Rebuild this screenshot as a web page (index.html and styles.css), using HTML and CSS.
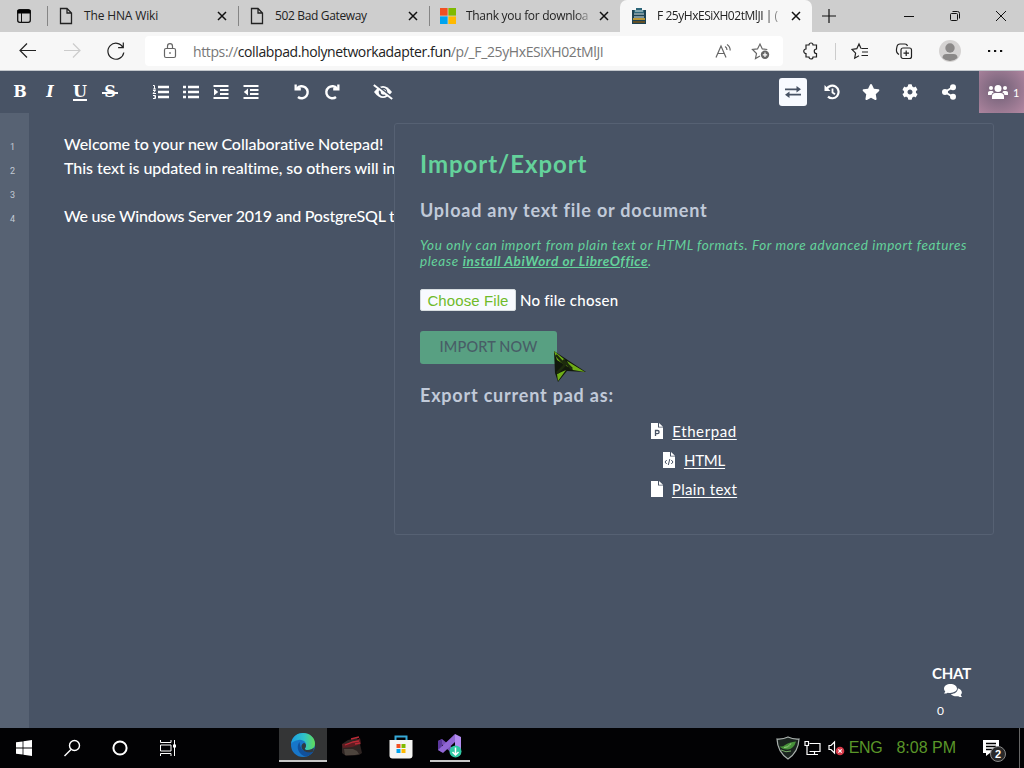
FILE: index.html
```html
<!DOCTYPE html>
<html lang="en">
<head>
  <meta charset="UTF-8">
  <title>F 25yHxESiXH02tMlJI</title>
  <link rel="stylesheet" href="styles.css">
</head>
<body>

  <!-- Browser tabs -->
  <div class="tab-bar">
    <div class="tab-actions">
      <svg width="16" height="16" viewBox="0 0 16 16"><rect x="1.7" y="1.7" width="12.6" height="12.6" rx="2" fill="none" stroke="#111" stroke-width="1.3"/><path d="M1.5 2h13v3.5h-13z"/><path d="M5.5 5v9" stroke="#111"/></svg>
    </div>
    <div class="tab">
      <svg class="tab-icon" width="16" height="18" viewBox="0 0 16 18"><path d="M2.5 1.5h6.500l4.500 4.500v10.500h-11zM9 1.500v4.500h4.500" fill="none" stroke="#222" stroke-width="1.300"/></svg>
      <span class="tab-title t1">The HNA Wiki</span>
      <svg class="tab-close" width="10" height="10" viewBox="0 0 10 10"><path d="M1 1l8 8M9 1L1 9"/></svg>
    </div>
    <div class="tab">
      <svg class="tab-icon" width="16" height="18" viewBox="0 0 16 18"><path d="M2.5 1.5h6.500l4.500 4.500v10.500h-11zM9 1.500v4.500h4.500" fill="none" stroke="#222" stroke-width="1.300"/></svg>
      <span class="tab-title t2">502 Bad Gateway</span>
      <svg class="tab-close" width="10" height="10" viewBox="0 0 10 10"><path d="M1 1l8 8M9 1L1 9"/></svg>
    </div>
    <div class="tab">
      <svg class="tab-icon" width="16" height="16" viewBox="0 0 16 16"><path d="M0 0h7.600v7.600H0z" fill="#f25022"/><path d="M8.400 0H16v7.600H8.400z" fill="#7fba00"/><path d="M0 8.400h7.600V16H0z" fill="#00a4ef"/><path d="M8.400 8.400H16V16H8.400z" fill="#ffb900"/></svg>
      <span class="tab-title t3 fade">Thank you for downloa</span>
      <svg class="tab-close" width="10" height="10" viewBox="0 0 10 10"><path d="M1 1l8 8M9 1L1 9"/></svg>
    </div>
    <div class="tab active">
      <svg class="tab-icon" width="16" height="16" viewBox="0 0 16 16"><path d="M1 2h14v14H1z" fill="#1d4253"/><path d="M5 2V0h6v2h2v3H3V2z" fill="#2d6679"/><path d="M4 3h8M3 6h10M3 9h10" stroke="#d7e5e8"/><path d="M2 10h12v2H2z" fill="#b79536"/><path d="M2 13h12v2H2z" fill="#624f25"/></svg>
      <span class="tab-title t4 fade">F 25yHxESiXH02tMlJI | (</span>
      <svg class="tab-close" width="10" height="10" viewBox="0 0 10 10"><path d="M1 1l8 8M9 1L1 9"/></svg>
    </div>
    <svg class="new-tab" width="14" height="14" viewBox="0 0 14 14"><path d="M7 0v14M0 7h14" stroke="#111" stroke-width="1.200"/></svg>
    <div class="window-buttons">
      <svg width="46" height="32" viewBox="0 0 46 32"><path d="M18 16.500h10"/></svg>
      <svg width="46" height="32" viewBox="0 0 46 32"><rect x="18.500" y="13.500" width="7" height="7" rx="1"/><path d="M20.500 11.500h5a2 2 0 0 1 2 2v5"/></svg>
      <svg width="46" height="32" viewBox="0 0 46 32"><path d="M18 11l10 10M28 11L18 21"/></svg>
    </div>
  </div>

  <!-- Address bar -->
  <div class="nav-bar">
    <div class="nav-buttons">
      <svg width="44" height="38" viewBox="0 0 44 38"><path d="M36 18.500H20.500M27 11.500l-7 7 7 7"/></svg>
      <svg class="disabled" width="44" height="38" viewBox="0 0 44 38"><path d="M20 18.500h15.500M29 11.500l7 7-7 7"/></svg>
      <svg width="44" height="38" viewBox="0 0 44 38"><path d="M35 15.500a8 8 0 1 0 .800 5M35.300 10.500v5.200h-5.200"/></svg>
    </div>
    <div class="address">
      <svg width="14" height="16" viewBox="0 0 14 16"><rect x="1.500" y="5.500" width="11" height="9" rx="1.500"/><path d="M4.500 5.500V3.200a2.500 2.500 0 0 1 5 0v2.300M7 9v2"/></svg>
      <span class="url">https://<b>collabpad.holynetworkadapter.fun</b>/p/_F_25yHxESiXH02tMlJI</span>
      <svg class="read-aloud" width="17" height="16" viewBox="0 0 17 16"><path d="M1 14.500L6 3l5 11.500M3 10.500h6M10 3.500q2 1 2 3.500M12 1.500q3.200 2 3.200 6"/></svg>
      <svg width="20" height="18" viewBox="0 0 20 18"><path d="M9 14l-4.500 2.500 1-5L1.500 7.500l5-.600L9 2l2.300 4.900 5 .600"/><circle cx="14" cy="12.800" r="4.200" fill="#666" stroke="none"/><path d="M14 10.600v4.400M11.800 12.800h4.400" stroke="#fff"/></svg>
    </div>
    <div class="browser-tools">
      <svg width="18" height="18" viewBox="0 0 18 18"><path d="M4 3h3a2 2 0 0 1 4 0h3.500v4a2 2 0 0 0 0 4.500V15H11a2 2 0 0 1-4 0H4v-3.500a2.200 2.200 0 0 1 0-4.500z"/></svg>
      <i></i>
      <svg width="18" height="18" viewBox="0 0 18 18"><path d="M10 6.500L8 2 5.800 6.700l-4.800.800 3.600 3.700-.900 5 4.300-2.400M10.500 6.500H17M11 10h6M10.500 13.500H17"/></svg>
      <svg width="18" height="18" viewBox="0 0 18 18"><rect x="6" y="6" width="10.500" height="10.500" rx="2"/><path d="M11.200 8.500v5.500M8.500 11.200H14M4 12.500Q1 11 1.500 7l.500-2.500Q2.500 2 5 2h5q2 0 2.500 2"/></svg>
      <svg class="avatar" width="22" height="22" viewBox="0 0 22 22"><circle cx="11" cy="11" r="11" fill="#d5d3d2"/><circle cx="11" cy="8" r="4.700" fill="#8b8988"/><path d="M3.500 18q0-4 4-4h7q4 0 4 4a11 11 0 0 1-15 0" fill="#8b8988"/></svg>
      <svg width="16" height="4" viewBox="0 0 16 4"><path d="M1 1h2.200v2H1zM7 1h2.200v2H7zM13 1h2.200v2H13z" fill="#111" stroke="none"/></svg>
    </div>
  </div>

  <!-- Editor toolbar -->
  <div class="toolbar">
    <div class="group">
      <span class="btn letter">B</span>
      <span class="btn letter italic">I</span>
      <span class="btn letter under">U</span>
      <span class="btn letter strike">S</span>
    </div>
    <div class="group">
      <span class="btn"><svg width="18" height="16" viewBox="0 0 18 16"><path d="M6 3h11M6 8h11M6 13h11" stroke="#fff" stroke-width="2.400"/><path d="M1 1.500h1.500V5M1 5h3M1 6.500h2.500L1 9.500h3M1 11.500h2.500v3H1m1-1.500h1" fill="none" stroke="#fff"/></svg></span>
      <span class="btn"><svg width="18" height="16" viewBox="0 0 18 16"><path d="M6 3h11M6 8h11M6 13h11M1 3h3M1 8h3M1 13h3" stroke="#fff" stroke-width="2.600"/></svg></span>
      <span class="btn"><svg width="16" height="16" viewBox="0 0 16 16"><path d="M.500 2h15M7 6h8.500M7 10h8.500M.500 14h15" stroke="#fff" stroke-width="2.200"/><path d="M1 4.500L5.200 8 1 11.500z" fill="#fff"/></svg></span>
      <span class="btn"><svg width="16" height="16" viewBox="0 0 16 16"><path d="M.500 2h15M7 6h8.500M7 10h8.500M.500 14h15" stroke="#fff" stroke-width="2.200"/><path d="M5 4.500L.800 8 5 11.500z" fill="#fff"/></svg></span>
    </div>
    <div class="group">
      <span class="btn"><svg width="16" height="16" viewBox="0 0 16 16"><path d="M3 4.500A6 6 0 1 1 4 13" fill="none" stroke="#fff" stroke-width="2.400"/><path d="M.500.500h2.300v3.400h4V6.500H.500z" fill="#fff"/></svg></span>
      <span class="btn"><svg width="16" height="16" viewBox="0 0 16 16"><path d="M13 4.500A6 6 0 1 0 12 13" fill="none" stroke="#fff" stroke-width="2.400"/><path d="M15.500.500h-2.300v3.400h-4V6.500h6.300z" fill="#fff"/></svg></span>
    </div>
    <div class="group">
      <span class="btn"><svg width="20" height="16" viewBox="0 0 20 16"><path d="M1 8q9-12 18 0-9 12-18 0z" fill="#fff"/><circle cx="10" cy="8" r="4.300" fill="#485365"/><circle cx="10.500" cy="8" r="2.700" fill="#fff"/><path d="M1 -.500L20 14" stroke="#485365" stroke-width="2"/><path d="M.800 1L19.200 15" stroke="#fff" stroke-width="2"/></svg></span>
    </div>
    <div class="pad-menu">
      <span class="menu-btn selected"><svg width="16" height="14" viewBox="0 0 16 14"><path d="M0 4.300h13M3 9.700h13" stroke="#485365" stroke-width="1.700"/><path d="M11.500 1L16 4.300l-4.500 3.200zM4.500 6.500L0 9.700 4.500 13z" fill="#485365"/></svg></span>
      <span class="menu-btn"><svg width="16" height="16" viewBox="0 0 16 16"><path d="M2.700 5A6.300 6.300 0 1 1 4 12.600" fill="none" stroke="#fff" stroke-width="2.200"/><path d="M.500 1v6h6z" fill="#fff"/><path d="M8.500 4.500v4l2.500 1.800" fill="none" stroke="#fff" stroke-width="1.800"/></svg></span>
      <span class="menu-btn"><svg width="18" height="16" viewBox="0 0 576 512"><path fill="#fff" d="M259.300 17.800L194 150.200 47.900 171.500c-26.200 3.800-36.700 36.100-17.700 54.600l105.700 103-25 145.500c-4.500 26.300 23.200 46 46.400 33.700L288 439.600l130.700 68.700c23.200 12.200 50.900-7.400 46.400-33.700l-25-145.500 105.700-103c19-18.500 8.500-50.800-17.700-54.600L382 150.200 316.700 17.800c-11.700-23.600-45.600-23.900-57.400 0z"/></svg></span>
      <span class="menu-btn"><svg width="16" height="16" viewBox="0 0 512 512"><path fill="#fff" d="M487.400 315.700l-42.600-24.600c4.300-23.200 4.300-47 0-70.200l42.600-24.600c4.900-2.800 7.100-8.600 5.500-14-11.100-35.600-30-67.800-54.700-94.600-3.800-4.100-10-5.100-14.800-2.300L380.800 110c-17.900-15.400-38.500-27.300-60.800-35.100V25.800c0-5.600-3.900-10.500-9.400-11.700-36.700-8.200-74.300-7.800-109.200 0-5.500 1.200-9.400 6.100-9.400 11.700V75c-22.200 7.900-42.800 19.800-60.800 35.100L88.700 85.500c-4.900-2.800-11-1.900-14.800 2.300-24.700 26.700-43.600 58.900-54.700 94.600-1.700 5.400.6 11.200 5.500 14L67.300 221c-4.300 23.200-4.300 47 0 70.200l-42.600 24.600c-4.900 2.800-7.100 8.600-5.500 14 11.100 35.600 30 67.800 54.700 94.600 3.800 4.100 10 5.100 14.800 2.300l42.600-24.600c17.900 15.400 38.500 27.300 60.800 35.100v49.200c0 5.600 3.900 10.500 9.400 11.700 36.700 8.200 74.300 7.800 109.200 0 5.500-1.200 9.400-6.100 9.400-11.700v-49.200c22.200-7.900 42.800-19.800 60.800-35.100l42.600 24.600c4.900 2.800 11 1.900 14.800-2.300 24.700-26.700 43.600-58.900 54.700-94.600 1.500-5.500-.7-11.300-5.600-14.100zM256 336c-44.100 0-80-35.900-80-80s35.900-80 80-80 80 35.900 80 80-35.900 80-80 80z"/></svg></span>
      <span class="menu-btn"><svg width="14" height="16" viewBox="0 0 14 16"><path d="M11 3L3 8l8 5" fill="none" stroke="#fff" stroke-width="2"/><g fill="#fff"><circle cx="11" cy="3.200" r="3"/><circle cx="3" cy="8" r="3"/><circle cx="11" cy="12.800" r="3"/></g></svg></span>
    </div>
    <div class="users">
      <svg width="20" height="16" viewBox="0 0 20 16"><g fill="#fff"><circle cx="10" cy="4.500" r="3.500"/><circle cx="3" cy="4" r="2"/><circle cx="17" cy="4" r="2"/><path d="M4 15v-2.500Q4 9 7.500 9h5q3.500 0 3.500 3.500V15zM0 10V8.500Q0 7 2 7h2.500l1.300 1.200Q3.700 9 3.500 11H0zM20 10V8.500Q20 7 18 7h-2.500l-1.300 1.200q2.100.800 2.300 2.800H20z"/></g></svg>
      <span>1</span>
    </div>
  </div>

  <!-- Pad -->
  <div class="editor">
    <div class="line-numbers">
      <div>1</div>
      <div>2</div>
      <div>3</div>
      <div>4</div>
    </div>
    <div class="pad-text">
      <div class="l1">Welcome to your new Collaborative Notepad!</div>
      <div class="l2">This text is updated in realtime, so others will in</div>
      <div>&nbsp;</div>
      <div class="l4">We use Windows Server 2019 and PostgreSQL t</div>
    </div>

    <div class="popup">
      <h1>Import/Export</h1>
      <h2>Upload any text file or document</h2>
      <p class="note"><span class="n1">You only can import from plain text or HTML formats. For more advanced import features</span><br><span class="n2">please <a>install AbiWord or LibreOffice</a>.</span></p>
      <div class="file-row"><span class="choose">Choose File</span><span class="no-file">No file chosen</span></div>
      <div class="import-btn">IMPORT NOW</div>
      <h2 class="export-title">Export current pad as:</h2>
      <div class="export-list">
        <div><svg width="12" height="16" viewBox="0 0 12 16"><path d="M0 0h7v4.500h5V16H0zM8 0l4 3.700H8z" fill="#fff"/><path d="M4.500 13V7.500h2a1.500 1.500 0 0 1 0 3.200h-2" fill="none" stroke="#485365" stroke-width="1.300"/></svg><a class="e1">Etherpad</a></div>
        <div><svg width="12" height="16" viewBox="0 0 12 16"><path d="M0 0h7v4.500h5V16H0zM8 0l4 3.700H8z" fill="#fff"/><path d="M3.700 8L2 10l1.700 2M8.300 8L10 10l-1.700 2M6.800 7l-1.500 6" fill="none" stroke="#485365"/></svg><a class="e2">HTML</a></div>
        <div><svg width="12" height="16" viewBox="0 0 12 16"><path d="M0 0h7v4.500h5V16H0zM8 0l4 3.700H8z" fill="#fff"/></svg><a class="e3">Plain text</a></div>
      </div>
    </div>

    <div class="chat">
      <b>CHAT</b>
      <svg width="18" height="14" viewBox="0 0 18 14"><path d="M6.500 0C2.800 0 0 2 0 4.600c0 1.200.5 2.200 1.300 3L0 9.600c1.500.1 2.800-.3 3.800-.9C9 9.500 13 7.600 13 4.600 13 2 10 0 6.500 0z" fill="#fff"/><path d="M13.800 4.300c.3 3.300-3 5.600-7 5.700 1.400 2 4.600 2.700 7.500 2.200 1.100.7 2.300 1 3.700.9l-1.300-2c2.200-2.200 1.300-5.600-2.900-6.800z" fill="#fff"/></svg>
      <span>0</span>
    </div>
  </div>

  <!-- Windows taskbar -->
  <div class="taskbar">
    <div class="task"><svg width="16" height="16" viewBox="0 0 16 16"><path d="M0 2.300L6.600 1.400v6.200H0zM7.400 1.300L16 0v7.600H7.400zM0 8.400h6.600v6.200L0 13.700zM7.400 8.400H16V16l-8.600-1.300z" fill="#fff"/></svg></div>
    <div class="task"><svg width="18" height="18" viewBox="0 0 18 18"><circle cx="11.500" cy="6.500" r="5" fill="none" stroke="#fff" stroke-width="1.400"/><path d="M8 10.500L1.500 17" stroke="#fff" stroke-width="1.500"/></svg></div>
    <div class="task"><svg width="18" height="18" viewBox="0 0 18 18"><circle cx="9" cy="9" r="6.600" fill="none" stroke="#fff" stroke-width="2"/></svg></div>
    <div class="task"><svg width="17" height="16" viewBox="0 0 17 16"><path d="M.500 0v2.500h10.500V0M.500 16v-2.500h10.500V16M.500 5h10.500v6H.500zM14.500 0v16" fill="none" stroke="#fff"/><path d="M13 4.500h3v3h-3z" fill="#fff"/></svg></div>
    <div class="apps">
      <div class="app current"><svg width="26" height="26" viewBox="0 0 26 26"><defs><linearGradient id="eg"><stop offset="0" stop-color="#1b9de2"/><stop offset=".55" stop-color="#2fc2c8"/><stop offset="1" stop-color="#62dc56"/></linearGradient></defs><circle cx="13" cy="13" r="12" fill="#1776c9"/><path d="M1 12C2 4 8 1 13 1c7 0 12 5 12 10.500 0 5-4 6.500-7.500 6.500-3 0-3-1.500-2-2.500C18 11 13 7 8.500 8 5 8.500 2 10 1 12z" fill="url(#eg)"/><path d="M9.500 10c-4 5-1 13 6.500 14.500 3-.500 6-2.500 7.500-5-7 2.500-13.500-1-14-9.500z" fill="#11509b"/><path d="M15.500 15.500c-1 1-1 2.500 2 2.500 3 0 5-1 6.300-2.200L23.500 19.500c-6 2.500-11.500-.500-12-4.500-.300-2 1.300-4 3-4 1.500 1 2 3 1 4.500z" fill="#303a40"/></svg></div>
      <div class="app"><svg width="24" height="24" viewBox="0 0 24 24"><path d="M2 9L8 5l9-2 3 6 2 9-3 2-13 1-4-3z" fill="#2e2422"/><path d="M2 9l12-2 6-4 1 6-9 3-9 1z" fill="#5e1d22"/><path d="M5 10l8-3 6-1M11 4l8-2M15 9l5-1" fill="none" stroke="#bb2936" stroke-width="1.300"/><path d="M4 14h9l4 2 2 3-4 1H5z" fill="#4d443d"/></svg></div>
      <div class="app"><svg width="24" height="26" viewBox="0 0 24 26"><path d="M6.500 7V2.500h11V7" fill="none" stroke="#36a9d8" stroke-width="2"/><path d="M.500 6h23v15.500q0 3-3 3h-17q-3 0-3-3z" fill="#f5f5f3"/><path d="M7.500 10h4v4h-4z" fill="#f25022"/><path d="M12.500 10h4v4h-4z" fill="#7fba00"/><path d="M7.500 15h4v4h-4z" fill="#00a4ef"/><path d="M12.500 15h4v4h-4z" fill="#ffb900"/></svg></div>
      <div class="app running"><svg width="26" height="26" viewBox="0 0 26 26"><path d="M1 8l4-2 17 14-4 3z" fill="#7851b9"/><path d="M1 8l4-2v13l-4-2z" fill="#5b379d"/><path d="M18 1l6 3v17l-6 3z" fill="#b38cf0"/><path d="M18 1v8L6 20l-5-3z" fill="#9167d5"/><circle cx="18.500" cy="18.500" r="6" fill="#2fc9a5"/><path d="M18.500 14.500v7M15.500 19l3 3 3-3" fill="none" stroke="#fff" stroke-width="1.500"/></svg></div>
    </div>
    <div class="tray">
      <svg class="rog" width="24" height="24" viewBox="0 0 24 24"><path d="M1 3q6 .500 11-2 5 2.500 11 2-.500 13-11 20Q1.500 16 1 3z" fill="#1b2420" stroke="#a9b0ad" stroke-width="1.200"/><path d="M3 10q3 1.500 6-1 4-3 11-3.500-2 7-8 8-5 .500-9-3.500z" fill="#47913a"/><path d="M5 14q5 3 10 1M8 11.500q3 .500 7-4-1 4-7 4z" fill="#1b2420" stroke="#8ccb76" stroke-width=".8"/></svg>
      <svg class="net" width="17" height="16" viewBox="0 0 17 16"><path d="M5.500 3.500h10.500v8H5.500M10.500 11.500v3M7 14.500h7M1 1.500h3.500v4H1zM3 5.500v9h4" fill="none" stroke="#fff" stroke-width="1.200"/></svg>
      <svg class="vol" width="17" height="16" viewBox="0 0 17 16"><path d="M1 5.500h2L6.500 2v11L3 9.500H1z" fill="none" stroke="#fff" stroke-width="1.200"/><circle cx="12" cy="11" r="4.300" fill="#d73a49"/><path d="M10.300 9.300l3.400 3.400M13.700 9.300l-3.400 3.400" stroke="#fff" stroke-width="1.200"/></svg>
      <span class="lang">ENG</span>
      <span class="clock">8:08 PM</span>
      <span class="notice">
        <svg width="18" height="18" viewBox="0 0 18 18"><path d="M1 1h16v13H8l-4 3v-3H1z" fill="#fff"/><path d="M4 4.500h10M4 7.500h10M4 10.500h6" stroke="#000" stroke-width="1.300"/></svg>
        <span class="badge">2</span>
      </span>
    </div>
  </div>

  <!-- Mouse pointer -->
  <svg class="pointer" width="35" height="34" viewBox="0 0 35 34"><path d="M1 1l32 21-19-1-9 11-3-9z" fill="#11180c"/><path d="M1 1l10 8 4 8L4 10zM14 11l18 11-12-2-4-5zM4 24l9-4-8 11z" fill="#6fae18"/><path d="M3 5l9 10-8 8M10 10l9 9" fill="none" stroke="#1d2b0d" stroke-width="2.500"/></svg>

</body>
</html>
```
FILE: styles.css
```css
* {
  box-sizing: border-box;
}

body {
  margin: 0;
  width: 1024px;
  height: 768px;
  overflow: hidden;
  display: flex;
  flex-direction: column;
  font-family: Lato, "Liberation Sans", sans-serif;
  background: #485365;
}

svg {
  flex: none;
}

/* Browser tabs */
.tab-bar {
  height: 32px;
  display: flex;
  align-items: center;
  background: #cecece;
  font: 12px "Open Sans", sans-serif;
  color: #222;
}

.tab-actions {
  width: 47px;
  padding-left: 16px;
  display: flex;
}

.tab {
  width: 191px;
  height: 32px;
  display: flex;
  align-items: center;
  padding: 0 11px 0 11px;
  background: linear-gradient(#858585, #858585) 0 50% / 1px 20px no-repeat;
}

.tab-icon {
  margin-right: 10px;
}

.tab-title {
  flex: 1;
  white-space: nowrap;
  line-height: 20px;
}

.fade {
  -webkit-mask-image: linear-gradient(to right, #000 85%, transparent);
  mask-image: linear-gradient(to right, #000 85%, transparent);
}

.tab-close {
  margin-left: 5px;
  fill: none;
  stroke: #111;
  stroke-width: 1.5;
}

.tab.active {
  width: 192px;
  background: #f7f7f7;
  border-radius: 7px 7px 0 0;
}

.t1 { letter-spacing: -0.15px; }
.t2 { letter-spacing: -0.35px; }
.t3 { letter-spacing: -0.3px; }
.t4 { letter-spacing: -0.45px; }

.new-tab {
  margin-left: 10px;
}

.window-buttons {
  margin-left: auto;
  display: flex;
  fill: none;
  stroke: #111;
}

/* Address bar */
.nav-bar {
  height: 39px;
  display: flex;
  align-items: center;
  background: #f7f7f7;
  border-bottom: 1px solid #c3c7cc;
  fill: none;
  stroke: #222;
  stroke-width: 1.2;
}

.nav-buttons {
  width: 145px;
  display: flex;
}

.disabled {
  stroke: #ccc;
}

.address {
  width: 638px;
  height: 30px;
  display: flex;
  align-items: center;
  padding: 0 12px 0 18px;
  background: #fff;
  border-radius: 4px;
  stroke: #666;
}

.url {
  flex: 1;
  margin-left: 16px;
  font: 14px "Open Sans", sans-serif;
  letter-spacing: -0.38px;
  color: #777;
}

.url b {
  font-weight: 400;
  color: #222;
}

.read-aloud {
  margin-right: 19px;
}

.browser-tools {
  flex: 1;
  display: flex;
  align-items: center;
  padding-left: 19px;
}

.browser-tools i {
  width: 1px;
  height: 17px;
  margin: 0 15px 0 15px;
  background: #ccc;
}

.browser-tools svg + svg {
  margin-left: 26px;
}

.browser-tools .avatar {
  stroke: none;
}

/* Editor toolbar */
.toolbar {
  height: 42px;
  display: flex;
  align-items: center;
  gap: 21px;
  padding-left: 5px;
  background: #485365;
  color: #fff;
}

.group {
  display: flex;
}

.btn {
  width: 30px;
  height: 28px;
  display: flex;
  align-items: center;
  justify-content: center;
}

.letter {
  font: bold 16px/20px "DejaVu Serif", serif;
}

.italic {
  font-style: italic;
}

.under {
  text-decoration: underline 2px;
  text-underline-offset: 2px;
}

.strike {
  position: relative;
}

.strike::after {
  content: "";
  position: absolute;
  left: 7px;
  top: 14px;
  width: 16px;
  height: 2px;
  background: #fff;
}

.pad-menu {
  display: flex;
  gap: 11px;
  margin-left: auto;
}

.menu-btn {
  width: 28px;
  height: 28px;
  display: flex;
  align-items: center;
  justify-content: center;
  border-radius: 3px;
}

.selected {
  background: #f8faff;
}

.users {
  width: 45px;
  height: 42px;
  display: flex;
  align-items: center;
  gap: 5px;
  padding-left: 9px;
  margin-left: -5px;
  background: radial-gradient(ellipse at 45% 45%, #79657c 15%, #b388a2 100%);
  font-size: 11px;
}

/* Pad */
.editor {
  position: relative;
  height: 615px;
  display: flex;
  background: #485365;
  color: #fff;
}

.line-numbers {
  width: 29px;
  padding: 22px 14px 0 0;
  text-align: right;
  font: 9px/24px Roboto, sans-serif;
  color: #c3cad5;
  background: #576273;
}

.pad-text {
  width: 365px;
  padding: 19px 0 0 35px;
  font-size: 16px;
  font-weight: 500;
  line-height: 24px;
  white-space: nowrap;
}

.l1 { letter-spacing: -0.04px; }
.l2 { letter-spacing: -0.05px; }
.l4 { letter-spacing: -0.22px; }

/* Import / export popup */
.popup {
  position: absolute;
  left: 394px;
  top: 10px;
  width: 600px;
  height: 412px;
  padding: 25px;
  background: #485365;
  border: 1px solid #566173;
  border-radius: 3px;
}

.popup h1 {
  margin: 0 0 18px;
  font-size: 24px;
  line-height: 30px;
  letter-spacing: 0.95px;
  color: #64d29b;
}

.popup h2 {
  margin: 0;
  font-size: 18px;
  line-height: 26px;
  letter-spacing: 0.79px;
  color: #c1cad9;
}

.note {
  margin: 14px 0 20px;
  font-size: 13.5px;
  line-height: 16px;
  font-style: italic;
  white-space: nowrap;
  color: #64d29b;
}

.note a {
  font-weight: bold;
  text-decoration: underline;
}

.n1 { letter-spacing: 0.58px; }
.n2 { letter-spacing: 0.58px; }

.file-row {
  display: flex;
  align-items: center;
  height: 22px;
}

.choose {
  width: 96px;
  height: 22px;
  text-align: center;
  font: 15px/21px "Liberation Sans", sans-serif;
  letter-spacing: 0.1px;
  color: #6fbb2b;
  background: #f8faff;
  border: 1px solid #d7dde0;
  border-radius: 2px;
}

.no-file {
  margin-left: 4px;
  font-size: 15px;
  font-weight: 500;
  letter-spacing: 0.25px;
}

.import-btn {
  width: 137px;
  height: 33px;
  margin: 20px 0 18px;
  text-align: center;
  font-size: 14.5px;
  font-weight: 500;
  line-height: 32px;
  letter-spacing: 0.15px;
  color: #485d67;
  background: #58a082;
  border-radius: 3px;
}

.export-list {
  display: flex;
  flex-direction: column;
  align-items: center;
  padding-top: 9px;
  font-size: 15px;
  line-height: 29px;
}

.export-list div {
  display: flex;
  align-items: center;
  height: 29px;
}

.export-list svg {
  margin: 0 9px 2px 0;
}

.export-list a {
  text-decoration: underline;
  text-underline-offset: 2px;
}

.e1 { letter-spacing: 0.6px; }
.e2 { letter-spacing: -0.2px; }
.e3 { letter-spacing: 0.35px; }

/* Chat box */
.chat {
  position: absolute;
  right: 53px;
  bottom: 8px;
  width: 39px;
  display: flex;
  flex-direction: column;
  align-items: center;
  font-size: 15px;
  line-height: 19px;
}

.chat b {
  padding-bottom: 1px;
  letter-spacing: -0.2px;
}

.chat svg {
  margin-left: 3px;
}

.chat span {
  align-self: flex-start;
  margin-left: 5px;
  padding-top: 4px;
  font-size: 12px;
  line-height: 18px;
}

/* Windows taskbar */
.taskbar {
  height: 40px;
  display: flex;
  background: #020204;
}

.task {
  width: 48px;
  display: flex;
  align-items: center;
  justify-content: center;
}

.apps {
  display: flex;
  margin-left: 87px;
}

.app {
  width: 49px;
  height: 34px;
  display: flex;
  align-items: center;
  justify-content: center;
  padding-top: 3px;
}

.app.current {
  width: 48px;
  background: #343536;
  border-bottom: 2px solid #c6c6c6;
  padding-top: 2px;
}

.app.running {
  width: 40px;
  margin-left: 5px;
  border-bottom: 2px solid #c6c6c6;
  padding-top: 4px;
}

.tray {
  flex: 1;
  display: flex;
  align-items: center;
  justify-content: flex-end;
  margin-right: 4px;
  padding-right: 15px;
  border-right: 1px solid #666;
  font: 16px "Liberation Sans", sans-serif;
  color: #5a9629;
}

.net { margin-left: 4px; }
.vol { margin-left: 7px; }
.lang { margin-left: 4px; letter-spacing: -0.3px; }
.clock { margin-left: 14px; }

.notice {
  position: relative;
  height: 18px;
  margin-left: 26px;
  padding-right: 4px;
}

.badge {
  position: absolute;
  left: 8px;
  top: 7px;
  width: 16px;
  height: 16px;
  border: 1px solid #888;
  border-radius: 50%;
  background: #292929;
  font: bold 11px/14px "Liberation Sans", sans-serif;
  text-align: center;
  color: #fff;
}

.pointer {
  position: absolute;
  left: 553px;
  top: 350px;
}
```
